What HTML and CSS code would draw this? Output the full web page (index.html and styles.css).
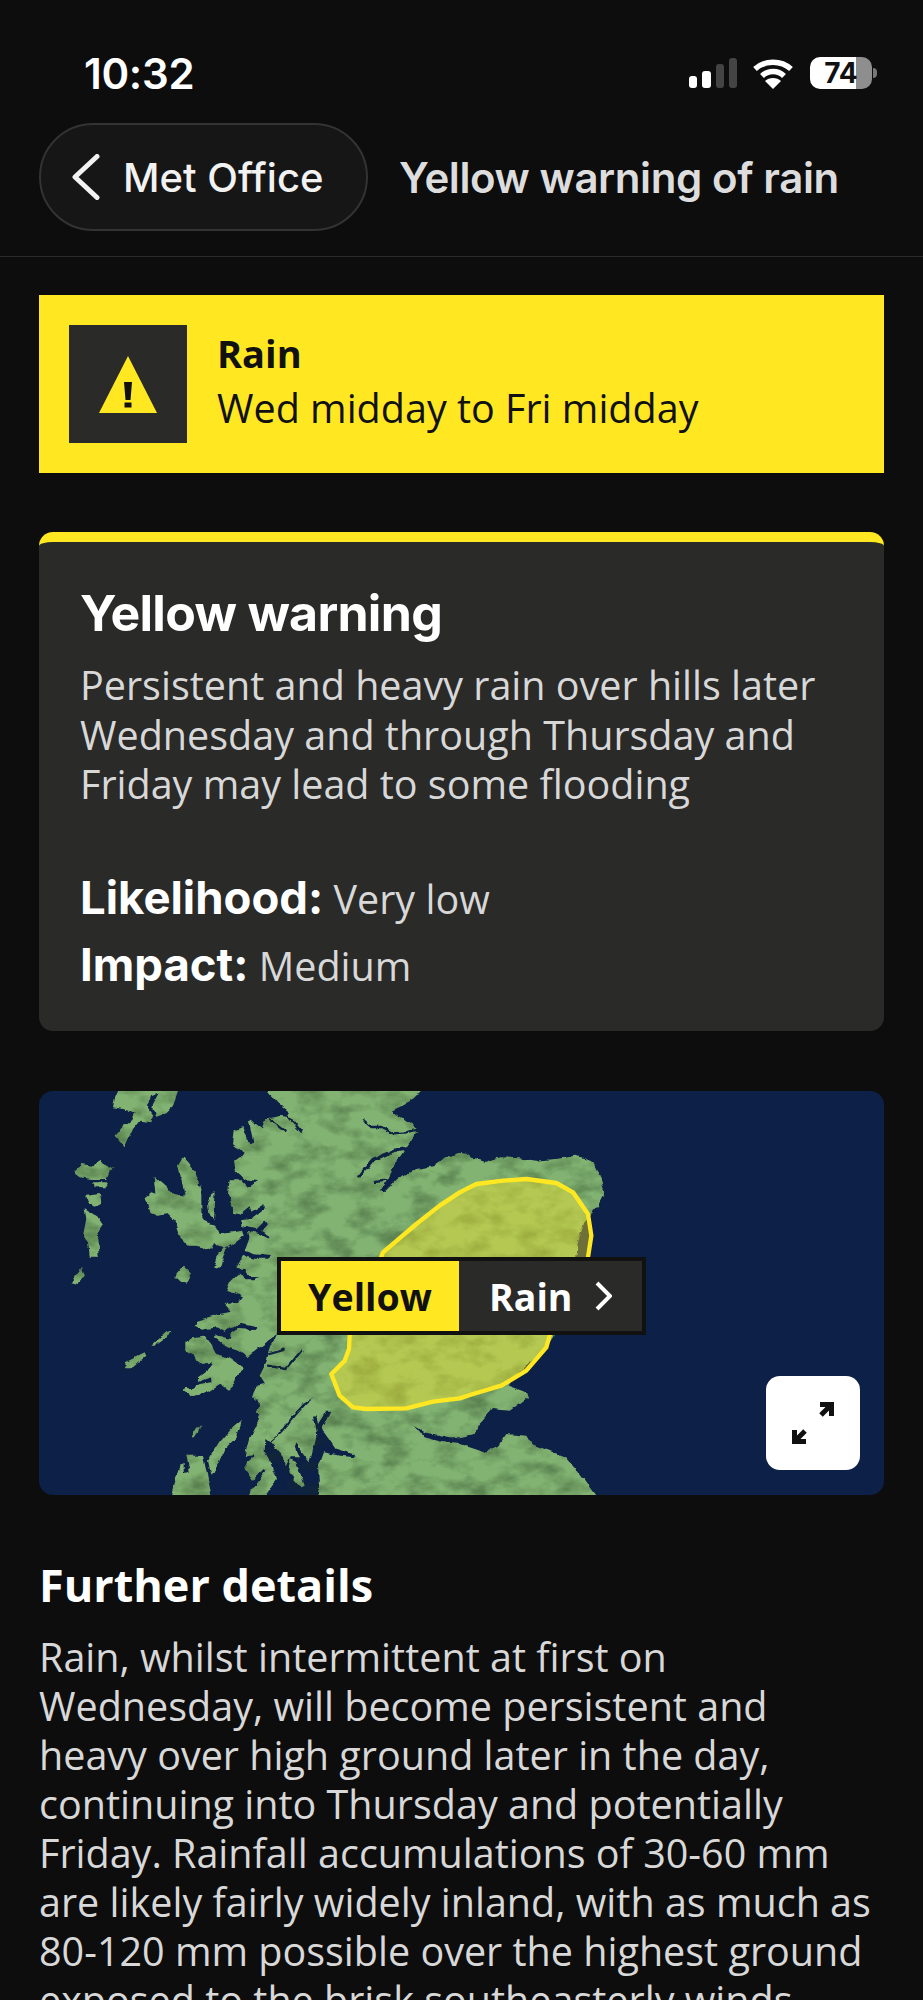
FILE: index.html
```html
<!doctype html>
<html lang="en">
<head>
<meta charset="utf-8">
<title>Yellow warning of rain</title>
<link rel="stylesheet" href="styles.css">
</head>

<body>
<div class="status">
  <span class="time">10:32</span>
  <div class="sicons">
    <svg class="signal" width="48" height="30" viewBox="0 0 48 30">
      <rect x="0" y="18" width="8" height="12" rx="3" fill="#fff"/>
      <rect x="13" y="13" width="9" height="17" rx="3" fill="#fff"/>
      <rect x="27" y="6" width="8" height="24" rx="3" fill="#444"/>
      <rect x="40" y="0" width="8" height="30" rx="3" fill="#444"/>
    </svg>
    <svg class="wifi" width="40" height="31" viewBox="0 0 40 31">
      <path d="M2 11 C12 2 28 2 38 11" fill="none" stroke="#fff" stroke-width="5.5"/>
      <path d="M9 18 C15 12 25 12 31 18" fill="none" stroke="#fff" stroke-width="5.5"/>
      <path d="M20 31 L12 23 C16 19 24 19 28 23 Z" fill="#fff"/>
    </svg>
    <div class="batt"><span class="battnum">74</span></div>
    <span class="nub"></span>
  </div>
</div>

<div class="nav">
  <div class="back">
    <svg width="28" height="46" viewBox="0 0 28 46"><path d="M25 2.500 L3 23 L25 43.500" fill="none" stroke="#f2f2f2" stroke-width="5" stroke-linecap="round" stroke-linejoin="round"/></svg>
    <span>Met Office</span>
  </div>
  <div class="navtitle">Yellow warning of rain</div>
</div>

<div class="main">
  <div class="banner">
    <div class="wicon">
      <svg width="58" height="57" viewBox="0 0 58 57">
        <path d="M29 0 L58 57 L0 57 Z" fill="#ffe822"/>
        <path d="M25 26 H33 L31.500 44 H26.500 Z" fill="#111"/>
        <rect x="25.500" y="46.500" width="7" height="5" fill="#111"/>
      </svg>
    </div>
    <div>
      <div class="btitle">Rain</div>
      <div class="bsub">Wed midday to Fri midday</div>
    </div>
  </div>

  <div class="card">
    <h2>Yellow warning</h2>
    <p>Persistent and heavy rain over hills later Wednesday and through Thursday and Friday may lead to some flooding</p>
    <div class="stat stat1"><b>Likelihood:</b> <span>Very low</span></div>
    <div class="stat"><b>Impact:</b> <span>Medium</span></div>
  </div>

  <div class="map">
    <svg class="land" width="845" height="404" viewBox="58 36 2535 1212">
      <defs>
        <filter id="coast" x="0" y="0" width="100%" height="100%" color-interpolation-filters="sRGB">
          <feTurbulence type="fractalNoise" baseFrequency=".035" numOctaves="3" seed="4" result="n"/>
          <feDisplacementMap in="SourceGraphic" in2="n" scale="16" xChannelSelector="R" yChannelSelector="G" result="d"/>
          <feGaussianBlur in="d" stdDeviation="1.5" result="b"/>
          <feTurbulence type="fractalNoise" baseFrequency=".012 .02" numOctaves="4" seed="9" result="m"/>
          <feColorMatrix in="m" type="matrix" values="0 0 0 0 .1  0 0 0 0 .2  0 0 0 0 .1  .9 0 0 0 -.38" result="dark"/>
          <feComposite in="dark" in2="b" operator="in" result="tex"/>
          <feMerge>
            <feMergeNode in="b"/>
            <feMergeNode in="tex"/>
          </feMerge>
        </filter>
      </defs>
      <g filter="url(#coast)">
      <g fill="#82b372">
        <!-- mainland -->
        <path d="M745 36 775 71 808 98 805 114 780 111 740 121 730 151 710 136 695 121 688 126 700 186 690 194 675 166 668 144 645 154 640 196 675 221 665 236 640 246 645 271 675 301 715 306 685 326 660 301 630 301 625 346 640 386 640 401 660 406 690 381 695 401 735 376 735 391 700 416 665 421 665 441 710 451 735 426 742 436 725 456 750 471 745 476 715 461 685 456 690 476 675 516 705 526 755 531 745 539 705 539 670 531 650 566 675 571 685 591 715 591 705 601 675 601 660 581 630 611 620 636 670 652 655 672 615 675 635 698 600 705 530 725 525 740 550 752 590 745 615 758 630 745 665 735 712 745 705 753 655 750 635 760 630 780 590 768 580 775 615 802 655 815 682 835 772 765 750 815 735 860 720 890 735 915 712 920 700 955 722 975 708 1000 722 1008 705 1050 685 1090 675 1130 700 1125 675 1170 700 1205 735 1170 740 1175 700 1225 685 1260 1735 1260 1670 1170 1640 1135 1535 1095 1520 1070 1460 1065 1435 1100 1395 1120 1320 1095 1270 1090 1215 1075 1185 1040 1215 1060 1290 1075 1320 1075 1365 1065 1375 1040 1420 990 1470 995 1525 955 1520 940 1465 920 1490 890 1520 860 1565 825 1600 775 1670 540 1670 530 1675 490 1695 425 1715 405 1735 380 1755 340 1740 290 1720 250 1670 230 1610 240 1550 245 1500 238 1440 235 1400 248 1360 240 1340 225 1320 222 1280 235 1240 262 1190 270 1130 300 1095 335 1080 338 1105 300 1130 250 1160 205 1195 152 1135 110 1115 95 1170 70 1215 25 745 25 Z"/>
        <!-- skye, raasay -->
        <path d="M490 235 530 280 545 330 545 400 555 425 590 440 600 465 670 455 675 470 620 510 600 565 580 570 590 535 615 505 580 490 570 510 530 500 510 500 480 470 465 430 440 405 415 410 390 400 375 355 395 340 410 345 405 290 440 320 460 345 495 350 485 300 475 260 Z"/>
        <path d="M575 345 585 340 580 420 570 410 565 375 Z"/>
        <!-- mull area -->
        <path d="M500 795 515 775 555 770 575 795 590 825 630 838 672 868 650 895 645 915 625 932 600 915 570 935 515 955 490 935 495 925 515 930 540 915 575 910 575 895 535 910 535 895 575 865 580 850 550 855 530 845 520 825 500 815 Z"/>
        <!-- outer hebrides -->
        <path d="M285 60 300 25 480 25 460 80 440 100 410 110 395 85 420 40 390 50 385 90 400 110 395 130 360 125 340 150 315 205 285 170 305 145 335 120 345 100 310 90 280 85 Z"/>
        <path d="M160 280 185 255 215 260 245 245 265 270 285 265 270 275 260 300 220 300 180 295 Z"/>
        <path d="M220 310 265 310 260 325 225 325 Z"/>
        <path d="M200 350 240 345 245 370 225 380 205 370 Z"/>
        <path d="M195 390 240 420 250 435 235 470 240 530 210 530 205 490 190 470 200 420 Z"/>
        <path d="M155 610 175 580 187 565 195 590 175 615 Z"/>
        <!-- small isles, coll, tiree -->
        <path d="M465 590 490 560 515 585 500 615 485 610 Z"/>
        <path d="M395 800 440 760 452 755 445 775 410 800 Z"/>
        <path d="M315 850 375 820 380 830 340 865 320 865 Z"/>
        <!-- gigha, jura, islay -->
        <path d="M515 1075 530 1050 542 1035 535 1060 525 1075 Z"/>
        <path d="M668 1022 635 1050 600 1090 565 1145 575 1190 595 1155 615 1110 645 1080 Z"/>
        <path d="M450 1260 480 1160 495 1155 495 1180 510 1175 500 1130 550 1130 578 1260 Z"/>
      </g>
      <!-- lochs -->
      <path fill="#0d2048" d="M885 955 850 975 810 1020 772 1072 750 1090 737 1080 735 1115 755 1150 772 1200 730 1260 900 1260 895 1160 910 1120 960 1130 1005 1135 1000 1125 950 1110 915 1060 905 1050 932 995 920 995 895 1035 890 1008 880 1010 890 1075 885 1095 870 1150 850 1125 830 1090 825 1105 838 1135 810 1135 795 1165 790 1135 755 1090 790 1060 825 1015 860 975 Z"/>
      <path fill="#82b372" d="M810 1140 830 1150 855 1220 845 1225 815 1190 805 1165 Z"/>
      <g fill="none" stroke="#0d2048" stroke-width="7" stroke-linecap="round" stroke-linejoin="round">
        <path d="M750 825 795 812"/>
        <path d="M745 860 800 870 845 815"/>
        <path d="M810 116 845 158"/>
        <path d="M755 121 795 151"/>
        <path d="M1032 124 1055 144 1085 144 1120 163 1160 160 1195 152"/>
        <path d="M1020 291 1060 241 1130 215 1155 210" stroke-width="10"/>
        <path d="M1065 306 1110 301"/>
      </g>
      </g>
      <!-- warning area -->
      <path d="M1090 520 1190 435 1260 380 1320 340 1370 315 1450 305 1520 300 1610 312 1660 340 1705 405 1715 470 1705 535 1590 770 1580 805 1520 875 1445 920 1360 945 1320 958 1240 968 1160 988 1040 990 1000 985 960 950 935 885 975 845 988 810 990 770 Z" fill="#ffe822" fill-opacity=".4" stroke="#ffe822" stroke-width="13" stroke-linejoin="round"/>
    </svg>

    <div class="tag">
      <span class="tagl">Yellow</span>
      <span class="tagr">Rain
        <svg width="17" height="30" viewBox="0 0 17 30"><path d="M2 2 L15 15 L2 28" fill="none" stroke="#fff" stroke-width="4"/></svg>
      </span>
    </div>

    <div class="expand">
      <svg width="42" height="42" viewBox="0 0 42 42">
        <path d="M28 2.500 H39.500 V14 M39 3 L29 13" stroke="#111" stroke-width="5" fill="none"/>
        <path d="M14 39.500 H2.500 V28 M3 39 L13 29" stroke="#111" stroke-width="5" fill="none"/>
      </svg>
    </div>
  </div>

  <h3>Further details</h3>
  <p class="details">Rain, whilst intermittent at first on Wednesday, will become persistent and heavy over high ground later in the day, continuing into Thursday and potentially Friday. Rainfall accumulations of 30-60 mm are likely fairly widely inland, with as much as 80-120 mm possible over the highest ground exposed to the brisk southeasterly winds. Given the</p>
</div>
</body>
</html>
```

FILE: styles.css
```css
html, body {
  margin: 0;
  height: 2000px;
  overflow: hidden;
  background: #0d0d0d;
}

body {
  font-family: "Open Sans", sans-serif;
  color: #d8d8d8;
}

.status {
  display: flex;
  justify-content: space-between;
  align-items: center;
  height: 32px;
  padding: 57px 46px 0 84px;
}
.time {
  font-family: Inter, sans-serif;
  font-size: 42px;
  font-weight: 600;
  color: #fff;
  letter-spacing: -.3px;
}
.sicons {
  display: flex;
  align-items: center;
}
.signal { margin-right: 16px; }
.wifi { margin-right: 17px; }
.batt {
  width: 62px;
  height: 32px;
  border-radius: 10px;
  background: linear-gradient(to right, #fff 74%, #8e8e8e 74%);
  display: flex;
  justify-content: center;
  align-items: center;
}
.battnum {
  font-family: Inter, sans-serif;
  font-size: 28px;
  font-weight: 700;
  color: #111;
}
.nub {
  width: 4px;
  height: 10px;
  margin-left: 1px;
  border-radius: 0 4px 4px 0;
  background: #777;
}

.nav {
  display: flex;
  align-items: center;
  height: 108px;
  margin-top: 34px;
  padding: 0 0 25px 39px;
  border-bottom: 1px solid #2b2b2b;
}
.back {
  display: flex;
  align-items: center;
  box-sizing: border-box;
  width: 329px;
  height: 108px;
  padding-left: 31px;
  border: 2px solid #333;
  border-radius: 54px;
  background: #161616;
  font-family: Inter, sans-serif;
  font-size: 40px;
  font-weight: 500;
  color: #f2f2f2;
}
.back svg { margin-right: 23px; }
.navtitle {
  margin-left: 31px;
  font-family: Inter, sans-serif;
  font-size: 42px;
  font-weight: 600;
  letter-spacing: -.4px;
  color: #ddd;
  white-space: nowrap;
}

.main { padding: 38px 39px 0; }

.banner {
  display: flex;
  align-items: center;
  height: 178px;
  padding-left: 30px;
  background: #ffe822;
  color: #111;
}
.wicon {
  display: flex;
  align-items: center;
  justify-content: center;
  width: 118px;
  height: 118px;
  margin-right: 30px;
  background: #2a2a29;
}
.btitle {
  font-size: 38px;
  font-weight: 700;
  line-height: 50px;
  margin-top: -3px;
}
.bsub {
  font-size: 39.500px;
  line-height: 60px;
}

.card {
  box-sizing: border-box;
  height: 499px;
  margin-top: 59px;
  padding: 42px 41px 0;
  border-top: 10px solid #ffe822;
  border-radius: 14px;
  background: #2a2a29;
}
.card h2 {
  margin: 0;
  font-family: Inter, sans-serif;
  font-size: 50px;
  font-weight: 700;
  letter-spacing: -.7px;
  line-height: 58px;
  color: #fff;
}
.card p {
  margin: 19px 0 0;
  font-size: 39.500px;
  line-height: 49.500px;
  color: #d8d8d8;
}
.stat {
  font-size: 39.500px;
  line-height: 66px;
}
.stat1 { margin-top: 55px; }
.stat b {
  font-family: Inter, sans-serif;
  font-size: 45.500px;
  font-weight: 700;
  color: #fff;
}

.map {
  position: relative;
  height: 404px;
  margin-top: 60px;
  border-radius: 14px;
  overflow: hidden;
  background: #0d2048;
}
.land { display: block; }
.tag {
  position: absolute;
  left: 238px;
  top: 166px;
  display: flex;
  height: 70px;
  border: 4px solid #111;
}
.tagl, .tagr {
  display: flex;
  align-items: center;
  font-size: 37.500px;
  font-weight: 700;
}
.tagl {
  width: 178px;
  justify-content: center;
  background: #ffe822;
  color: #111;
}
.tagr {
  width: 183px;
  padding-left: 30px;
  box-sizing: border-box;
  background: #2a2a29;
  color: #fff;
}
.tagr svg { margin-left: 22px; }
.expand {
  position: absolute;
  right: 24px;
  bottom: 25px;
  display: flex;
  align-items: center;
  justify-content: center;
  width: 94px;
  height: 94px;
  border-radius: 14px;
  background: #fff;
}

h3 {
  margin: 60px 0 0;
  font-size: 45px;
  font-weight: 700;
  line-height: 60px;
  color: #fff;
}
.details {
  margin: 18px 0 0;
  font-size: 39.500px;
  line-height: 49px;
  color: #d8d8d8;
}
```
